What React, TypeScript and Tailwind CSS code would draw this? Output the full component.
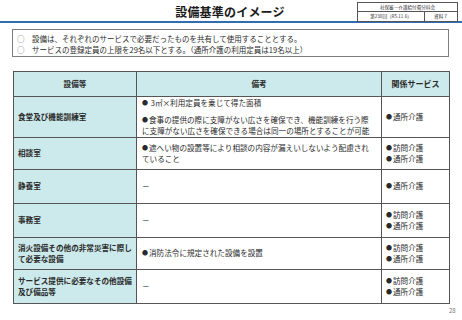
import React from 'react'

const FONT = { fontFamily: '"Noto Sans CJK JP", "Noto Sans", sans-serif' }

function Dot() {
  return <span className="text-[6px] align-[1px] mr-[1px]">●</span>
}

type Row = {
  name: string[]
  note: React.ReactNode
  services: string[]
  h: string
}

const rows: Row[] = [
  {
    name: ['食堂及び機能訓練室'],
    note: (
      <>
        <div className="mb-[5px]">
          <Dot /> 3㎡×利用定員を乗じて得た面積
        </div>
        <div>
          <Dot />
          食事の提供の際に支障がない広さを確保でき、機能訓練を行う際
        </div>
        <div>に支障がない広さを確保できる場合は同一の場所とすることが可能</div>
      </>
    ),
    services: ['通所介護'],
    h: 'h-[40px]',
  },
  {
    name: ['相談室'],
    note: (
      <>
        <div>
          <Dot />
          遮へい物の設置等により相談の内容が漏えいしないよう配慮され
        </div>
        <div>ていること</div>
      </>
    ),
    services: ['訪問介護', '通所介護'],
    h: 'h-[32px]',
  },
  { name: ['静養室'], note: <div>－</div>, services: ['通所介護'], h: 'h-[34px]' },
  { name: ['事務室'], note: <div>－</div>, services: ['訪問介護', '通所介護'], h: 'h-[34px]' },
  {
    name: ['消火設備その他の非常災害に際し', 'て必要な設備'],
    note: (
      <div>
        <Dot />
        消防法令に規定された設備を設置
      </div>
    ),
    services: ['訪問介護', '通所介護'],
    h: 'h-[32px]',
  },
  {
    name: ['サービス提供に必要なその他設備', '及び備品等'],
    note: <div>－</div>,
    services: ['訪問介護', '通所介護'],
    h: 'h-[34px]',
  },
]

export default function App() {
  return (
    <div className="w-[462px] h-[320px] bg-white text-[#2a2a2a] relative overflow-hidden" style={FONT}>
      {/* header */}
      <div className="relative h-[21px] flex items-center justify-center">
        <h1 className="text-[12px] font-bold leading-none tracking-[0.2px] ml-[-2px] mt-[3px] text-[#1a1a1a]">
          設備基準のイメージ
        </h1>
        <div className="absolute top-[2px] left-[357px] w-[101px] border border-[#555] text-[4.6px] leading-none text-[#333]">
          <div className="h-[9px] flex items-center justify-center border-b border-[#555]">
            社保審－介護給付費分科会
          </div>
          <div className="h-[9px] flex">
            <div className="w-[67px] flex items-center justify-center border-r border-[#555]">
              第230回（R5.11.6）
            </div>
            <div className="flex-1 flex items-center justify-center">資料７</div>
          </div>
        </div>
      </div>
      <div className="h-[2px] bg-[#2f6db5]" />

      {/* summary box */}
      <div className="mt-[6px] ml-[12px] w-[437px] h-[28px] border-[1.5px] border-[#7d7d7d] px-[4px] pt-[3px] text-[7.5px] leading-[11px]">
        <div className="flex">
          <span className="w-[15px] text-[#555]">○</span>
          <span>設備は、それぞれのサービスで必要だったものを共有して使用することとする。</span>
        </div>
        <div className="flex">
          <span className="w-[15px] text-[#555]">○</span>
          <span>サービスの登録定員の上限を29名以下とする。（通所介護の利用定員は19名以上）</span>
        </div>
      </div>

      {/* table */}
      <table className="mt-[14px] ml-[13px] w-[436px] border-collapse border-[1.5px] border-[#555] text-[7.6px] leading-[11.5px] table-fixed">
        <colgroup>
          <col className="w-[123px]" />
          <col className="w-[245px]" />
          <col className="w-[68px]" />
        </colgroup>
        <thead>
          <tr className="h-[25px] bg-[#cce9eb] font-bold">
            <th className="border border-[#555] text-center">設備等</th>
            <th className="border border-[#555] text-center">備考</th>
            <th className="border border-[#555] text-center text-[8px]">関係サービス</th>
          </tr>
        </thead>
        <tbody>
          {rows.map((r) => (
            <tr key={r.name.join('')} className={r.h}>
              <td className="border border-[#555] bg-[#cce9eb] font-bold pl-[4px] align-middle">
                {r.name.map((n) => (
                  <div key={n}>{n}</div>
                ))}
              </td>
              <td className="border border-[#555] pl-[5px] align-middle whitespace-nowrap">{r.note}</td>
              <td className="border border-[#555] pl-[4px] align-middle">
                {r.services.map((s) => (
                  <div key={s}>
                    <Dot />
                    {s}
                  </div>
                ))}
              </td>
            </tr>
          ))}
        </tbody>
      </table>

      <div className="absolute left-[449px] top-[306px] text-[6px] text-[#777]">28</div>
    </div>
  )
}
